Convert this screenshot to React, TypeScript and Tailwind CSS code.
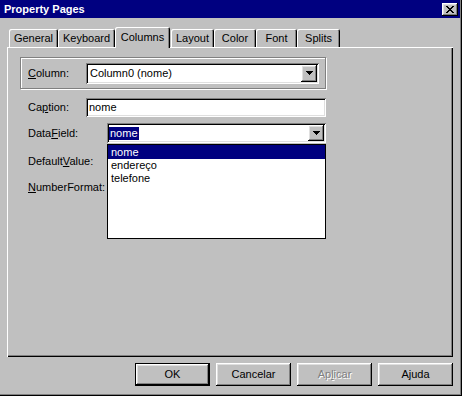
import React from "react";

const raised =
  "shadow-[inset_-1px_-1px_#000,inset_1px_1px_#fff,inset_-2px_-2px_#808080,inset_2px_2px_#dfdfdf]";
const sunken =
  "shadow-[inset_1px_1px_#808080,inset_-1px_-1px_#fff,inset_2px_2px_#000,inset_-2px_-2px_#dfdfdf]";

function Arrow() {
  return (
    <svg width="7" height="4" viewBox="0 0 7 4" shapeRendering="crispEdges">
      <rect x="0" y="0" width="7" height="1" fill="#000" />
      <rect x="1" y="1" width="5" height="1" fill="#000" />
      <rect x="2" y="2" width="3" height="1" fill="#000" />
      <rect x="3" y="3" width="1" height="1" fill="#000" />
    </svg>
  );
}

function CloseGlyph() {
  const rows = ["11000011", "01100110", "00111100", "00011000", "00111100", "01100110", "11000011"];
  return (
    <svg width="8" height="7" viewBox="0 0 8 7" shapeRendering="crispEdges">
      {rows.map((r, y) =>
        r.split("").map((c, x) =>
          c === "1" ? <rect key={`${x}-${y}`} x={x} y={y} width="1" height="1" fill="#000" /> : null
        )
      )}
    </svg>
  );
}

function Combo({ width, height, children }: { width: string; height: string; children: React.ReactNode }) {
  return (
    <div className={`${width} ${height} ${sunken} bg-white flex p-[2px]`}>
      <div className="flex-1 flex items-center overflow-hidden">{children}</div>
      <div className={`w-[16px] h-full bg-[#c0c0c0] ${raised} flex items-center justify-center`}>
        <Arrow />
      </div>
    </div>
  );
}

type Tab = { label: string; w: string; extra?: string };

const tabs: Tab[] = [
  { label: "General", w: "w-[49px]" },
  { label: "Keyboard", w: "w-[57px]" },
  { label: "Columns", w: "w-[55px]" },
  { label: "Layout", w: "w-[43px]", extra: "ml-[1px]" },
  { label: "Color", w: "w-[42px]" },
  { label: "Font", w: "w-[41px]" },
  { label: "Splits", w: "w-[43px]" },
];

function Btn({ children, primary, disabled }: { children: React.ReactNode; primary?: boolean; disabled?: boolean }) {
  return (
    <div
      className={`w-[75px] h-[23px] bg-[#c0c0c0] flex items-center justify-center ${
        primary ? "border border-black" : ""
      }`}
    >
      <div
        className={`w-full h-full ${raised} flex items-center justify-center ${
          disabled ? "text-[#808080] [text-shadow:1px_1px_#fff]" : "text-black"
        }`}
      >
        {children}
      </div>
    </div>
  );
}

export default function App() {
  return (
    <div className="w-[462px] h-[396px] bg-[#c0c0c0] shadow-[inset_-1px_-1px_#000,inset_-2px_-2px_#808080] [font-family:'Liberation_Sans',Arial,sans-serif] text-[11px] leading-[13px] text-black select-none">
      {/* title bar */}
      <div className="h-[18px] mr-[2px] bg-[#000080] flex items-start justify-between pl-[4px] pr-[2px]">
        <span className="mt-[3px] font-bold text-white text-[11px] leading-[13px]">Property Pages</span>
        <div className={`mt-[3px] w-[16px] h-[13px] bg-[#c0c0c0] ${raised} flex items-center justify-center`}>
          <CloseGlyph />
        </div>
      </div>

      <div className="ml-[7px] w-[446px]">
        {/* tabs */}
        <div className="mt-[9px] h-[20px] pl-[2px] flex items-end relative z-10">
          {tabs.map((t) =>
            t.label === "Columns" ? (
              <div
                key={t.label}
                className={`${t.w} h-[21px] -mb-[1px] bg-[#c0c0c0] rounded-t-[2px] shadow-[inset_1px_1px_#fff,inset_-1px_0_#000,inset_-2px_0_#808080] flex items-center justify-center pb-[1px]`}
              >
                {t.label}
              </div>
            ) : (
              <div
                key={t.label}
                className={`${t.w} ${t.extra ?? ""} h-[18px] bg-[#c0c0c0] rounded-t-[2px] shadow-[inset_1px_1px_#fff,inset_-1px_0_#000,inset_-2px_0_#808080] flex items-center justify-center`}
              >
                {t.label}
              </div>
            )
          )}
        </div>

        {/* panel */}
        <div className="relative h-[310px] shadow-[inset_1px_1px_#fff,inset_-1px_-1px_#000,inset_-2px_-2px_#808080] pt-[10px]">
          <div className="ml-[13px] w-[306px] h-[32px] border border-[#808080] shadow-[inset_1px_1px_#fff,1px_1px_#fff] flex items-center">
            <span className="w-[65px] pl-[7px]">
              <u>C</u>olumn:
            </span>
            <Combo width="w-[233px]" height="h-[21px]">
              <span className="pl-[2px]">Column0 (nome)</span>
            </Combo>
          </div>

          <div className="mt-[9px] ml-[21px] h-[19px] flex items-center">
            <span className="w-[58px]">
              Ca<u>p</u>tion:
            </span>
            <div className={`w-[240px] h-[19px] ${sunken} bg-white flex items-center pl-[3px]`}>nome</div>
          </div>

          <div className="mt-[6px] ml-[21px] h-[20px] flex items-center">
            <span className="w-[79px]">
              Data<u>F</u>ield:
            </span>
            <Combo width="w-[219px]" height="h-[20px]">
              <span className="bg-[#000080] text-white px-[1px]">nome</span>
            </Combo>
          </div>

          <div className="mt-[8px] ml-[21px] h-[20px] flex items-center">
            <span>
              Default<u>V</u>alue:
            </span>
          </div>

          <div className="mt-[6px] ml-[21px] h-[20px] flex items-center">
            <span>
              <u>N</u>umberFormat:
            </span>
          </div>

          {/* open dropdown list */}
          <div className="absolute left-[100px] top-[97px] w-[219px] h-[95px] border border-black bg-white">
            <div className="h-[14px] bg-[#000080] text-white pl-[3px] flex items-center">nome</div>
            <div className="h-[13px] pl-[3px] flex items-center">endereço</div>
            <div className="h-[13px] pl-[3px] flex items-center">telefone</div>
          </div>
        </div>
      </div>

      {/* buttons */}
      <div className="mt-[6px] pr-[9px] flex justify-end gap-[6px]">
        <Btn primary>OK</Btn>
        <Btn>Cancelar</Btn>
        <Btn disabled>
          Ap<u>l</u>icar
        </Btn>
        <Btn>Ajuda</Btn>
      </div>
    </div>
  );
}
